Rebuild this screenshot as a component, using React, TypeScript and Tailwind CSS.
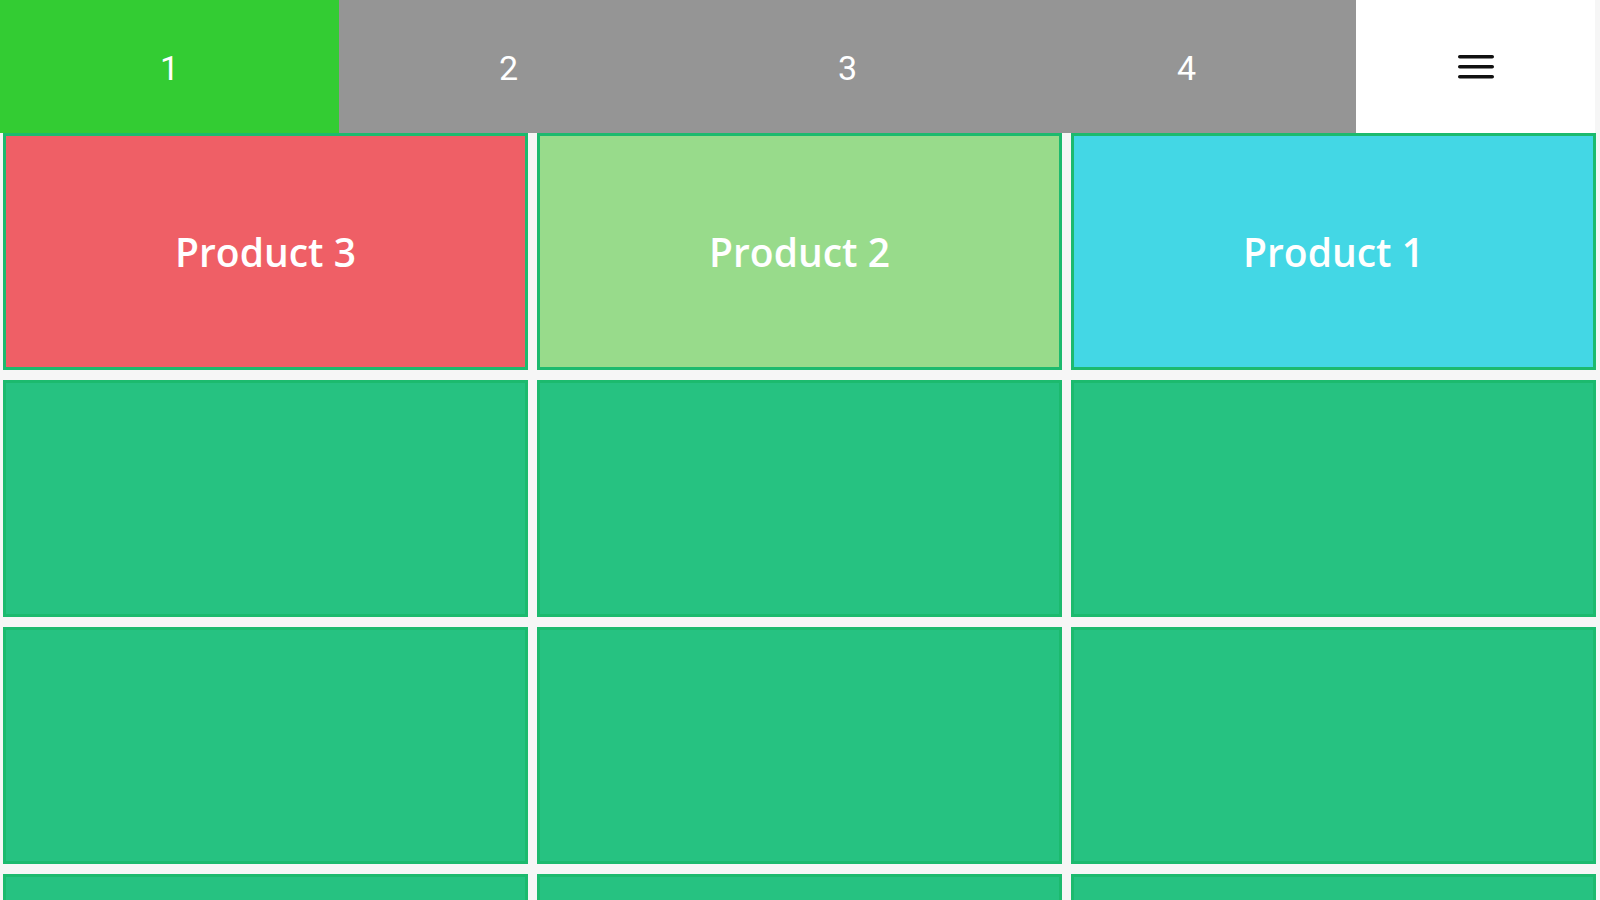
const tabs = ["1", "2", "3", "4"]

const products = [
  { name: "Product 3", bg: "bg-[#ef5f66]" },
  { name: "Product 2", bg: "bg-[#98db8b]" },
  { name: "Product 1", bg: "bg-[#43d7e5]" },
]

export default function App() {
  return (
    <div className="h-[900px] w-[1600px] overflow-hidden bg-[#f6f6f6] font-['Open_Sans',sans-serif]">
      {/* Top tabs */}
      <div className="flex h-[133px] w-[1595px]">
        {tabs.map((t, i) => (
          <div
            key={t}
            className={`flex w-[339px] items-center justify-center pt-[4px] font-['Roboto',sans-serif] text-[34px] text-white ${
              i === 0 ? "bg-[#33cc33]" : "bg-[#959595]"
            }`}
          >
            {t}
          </div>
        ))}
        <div className="flex flex-1 items-center justify-center bg-white">
          <svg width="38" height="28" viewBox="0 0 38 28">
            <rect x="1" y="2" width="36" height="3.5" rx="1.75" fill="#111" />
            <rect x="1" y="12" width="36" height="3.5" rx="1.75" fill="#111" />
            <rect x="1" y="22" width="36" height="3.5" rx="1.75" fill="#111" />
          </svg>
        </div>
      </div>

      {/* Product grid */}
      <div className="grid grid-cols-3 gap-x-[9px] gap-y-[10px] pl-[3px] pr-[4px]">
        {products.map((p) => (
          <div
            key={p.name}
            className={`flex h-[237px] items-center justify-center border-[3px] border-[#1cba6e] ${p.bg} pt-[2px] text-[39px] font-semibold text-white`}
          >
            {p.name}
          </div>
        ))}
        {[...Array(9)].map((_, i) => (
          <div key={i} className="h-[237px] border-[3px] border-[#1cba6e] bg-[#26c281]" />
        ))}
      </div>
    </div>
  )
}
